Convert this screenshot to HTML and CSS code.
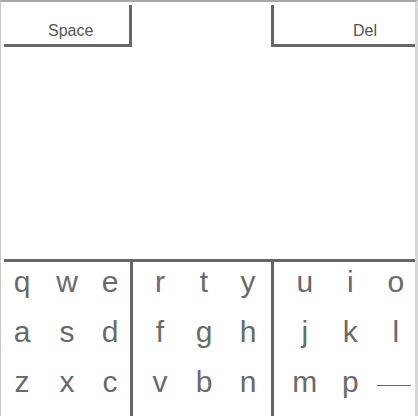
FILE: index.html
```html
<!DOCTYPE html>
<html>
<head>
<meta charset="utf-8">
<link rel="stylesheet" href="styles.css">
</head>
<body>
<div class="frame">
  <div class="top">
    <div class="btn space">Space</div>
    <div class="btn del">Del</div>
  </div>
  <div class="blank"></div>
  <div class="keyboard">
    <div class="group g1">
      <span>q</span><span>w</span><span>e</span>
      <span>a</span><span>s</span><span>d</span>
      <span>z</span><span>x</span><span>c</span>
    </div>
    <div class="group g2">
      <span>r</span><span>t</span><span>y</span>
      <span>f</span><span>g</span><span>h</span>
      <span>v</span><span>b</span><span>n</span>
    </div>
    <div class="group g3">
      <span>u</span><span>i</span><span>o</span>
      <span>j</span><span>k</span><span>l</span>
      <span>m</span><span>p</span><span class="dash"><i></i></span>
    </div>
  </div>
</div>
</body>
</html>
```
FILE: styles.css
```css
html, body {
  margin: 0;
  padding: 0;
  background: #fff;
}
.frame {
  box-sizing: border-box;
  width: 418px;
  height: 416px;
  border-top: 2px solid #a8a8a8;
  border-left: 1px solid #c8c8c8;
  border-right: 3px solid #d8d8d8;
  display: flex;
  flex-direction: column;
  padding: 3px 0 0 3px;
  font-family: "Liberation Sans", Arial, sans-serif;
  color: #6a6a6a;
}
.top {
  display: flex;
  justify-content: space-between;
  width: 411px;
  height: 42px;
}
.btn {
  box-sizing: border-box;
  height: 42px;
  border-bottom: 3px solid #666;
  font-size: 16px;
  line-height: 16px;
  display: flex;
  align-items: flex-end;
  padding-bottom: 5px;
  color: #555;
}
.space {
  width: 128px;
  border-right: 3px solid #666;
  padding-left: 44px;
}
.del {
  width: 144px;
  border-left: 3px solid #666;
  padding-left: 79px;
}
.blank {
  height: 212px;
}
.keyboard {
  display: flex;
  width: 411px;
  border-top: 3px solid #666;
  flex: 1;
}
.group {
  display: grid;
  grid-auto-rows: 50px;
  font-size: 30px;
  line-height: 40px;
  box-sizing: border-box;
}
.group span {
  text-align: center;
}
.g1 {
  width: 129px;
  border-right: 3px solid #666;
  grid-template-columns: 36px 54px 32px;
}
.g2 {
  width: 141px;
  border-right: 3px solid #666;
  padding-left: 5px;
  grid-template-columns: repeat(3, 44px);
}
.g3 {
  width: 141px;
  padding-left: 8px;
  grid-template-columns: repeat(3, 45.5px);
}
.dash {
  display: flex;
  justify-content: center;
  align-items: flex-start;
}
.dash i {
  display: block;
  width: 34px;
  height: 1px;
  background: #666;
  margin-top: 23px;
  margin-left: -4px;
}
```
